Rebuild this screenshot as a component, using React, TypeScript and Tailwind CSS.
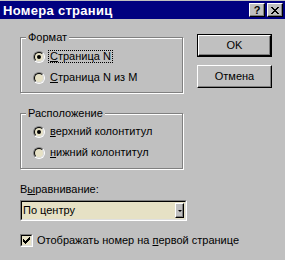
import React from "react";

function Radio({ checked }: { checked?: boolean }) {
  return (
    <span className="flex h-3 w-3 shrink-0 rounded-full border border-t-[#808080] border-l-[#808080] border-b-white border-r-white">
      <span className="flex flex-1 items-center justify-center rounded-full border border-t-black border-l-black border-b-[#dfdfdf] border-r-[#dfdfdf] bg-[#e6e1c5]">
        {checked && <span className="h-1 w-1 rounded-full bg-black" />}
      </span>
    </span>
  );
}

function Group({ label, children }: { label: string; children: React.ReactNode }) {
  return (
    <div className="flex h-[56px] w-[163px] flex-col border border-[#808080] shadow-[inset_1px_1px_0_#fff,1px_1px_0_#fff]">
      <span className="-mt-[7px] ml-[5px] w-fit bg-[#c0c0c0] px-[2px] leading-[13px]">{label}</span>
      {children}
    </div>
  );
}

function Button({ children, isDefault }: { children: React.ReactNode; isDefault?: boolean }) {
  return (
    <div className={isDefault ? "h-[23px] w-[75px] border border-black" : "h-[23px] w-[75px]"}>
      <div className="flex h-full w-full items-center justify-center border border-t-white border-l-white border-b-black border-r-black shadow-[inset_-1px_-1px_0_#808080]">
        {children}
      </div>
    </div>
  );
}

export default function App() {
  return (
    <div className="h-[260px] w-[285px] overflow-hidden bg-[#c0c0c0] text-[11px] text-black [font-family:'Liberation_Sans',Arial,sans-serif]">
      <div className="mt-px flex h-[18px] items-center justify-between bg-[#000080] pl-[3px] pr-[2px]">
        <span className="text-[13px] font-bold leading-none tracking-[0.3px] text-white">Номера страниц</span>
        <div className="flex gap-[2px]">
          <span className="flex h-[14px] w-4 items-center justify-center border border-t-white border-l-white border-b-black border-r-black bg-[#c0c0c0] text-[11px] font-bold leading-none shadow-[inset_-1px_-1px_0_#808080]">
            ?
          </span>
          <span className="flex h-[14px] w-4 items-center justify-center border border-t-white border-l-white border-b-black border-r-black bg-[#c0c0c0] shadow-[inset_-1px_-1px_0_#808080]">
            <svg width="8" height="7" viewBox="0 0 8 7" shapeRendering="crispEdges">
              <path d="M0 0h2v1h-2zM6 0h2v1h-2zM1 1h2v1h-2zM5 1h2v1h-2zM2 2h4v1h-4zM3 3h2v1h-2zM2 4h4v1h-4zM1 5h2v1h-2zM5 5h2v1h-2zM0 6h2v1h-2zM6 6h2v1h-2z" fill="#000" />
            </svg>
          </span>
        </div>
      </div>

      <div className="flex pl-[20px]">
        <div className="flex w-[167px] shrink-0 flex-col">
          <div className="mt-[18px]">
            <Group label="Формат">
              <div className="ml-[12px] mt-[6px] flex h-[13px] items-center gap-[3px]">
                <Radio checked />
                <span className="border border-dotted border-black px-px leading-[11px]">
                  <u>С</u>траница N
                </span>
              </div>
              <div className="ml-[12px] mt-[8px] flex h-[13px] items-center gap-[4px]">
                <Radio />
                <span className="px-px leading-[11px]">
                  <u>С</u>траница N из М
                </span>
              </div>
            </Group>
          </div>
          <div className="mt-[20px]">
            <Group label="Расположение">
              <div className="ml-[12px] mt-[5px] flex h-[13px] items-center gap-[4px]">
                <Radio checked />
                <span className="px-px leading-[11px]">
                  <u>в</u>ерхний колонтитул
                </span>
              </div>
              <div className="ml-[12px] mt-[8px] flex h-[13px] items-center gap-[4px]">
                <Radio />
                <span className="px-px leading-[11px]">
                  <u>н</u>ижний колонтитул
                </span>
              </div>
            </Group>
          </div>
          <span className="mt-[14px] leading-[13px]">
            В<u>ы</u>равнивание:
          </span>
          <div className="mt-[4px] flex h-[21px] w-[167px] border border-t-[#808080] border-l-[#808080] border-b-white border-r-white">
            <div className="flex flex-1 items-center border border-t-black border-l-black border-b-[#dfdfdf] border-r-[#dfdfdf] bg-[#e6e1c5] pl-px pr-px">
              <span className="flex-1 leading-none">По центру</span>
              <span className="flex h-[15px] w-[9px] items-center justify-center border border-t-white border-l-white border-b-black border-r-black bg-[#c0c0c0] shadow-[inset_-1px_-1px_0_#808080]">
                <span className="h-0 w-0 border-x-[2px] border-t-[2px] border-x-transparent border-t-black" />
              </span>
            </div>
          </div>
          <div className="mt-[13px] flex h-[13px] items-center gap-[4px] whitespace-nowrap">
            <span className="flex h-[13px] w-[13px] shrink-0 border border-t-[#808080] border-l-[#808080] border-b-white border-r-white">
              <span className="flex flex-1 items-center justify-center border border-t-black border-l-black border-b-[#dfdfdf] border-r-[#dfdfdf] bg-[#e6e1c5]">
                <svg width="7" height="7" viewBox="0 0 7 7" shapeRendering="crispEdges">
                  <path d="M6 0h1v3h-1zM5 1h1v3h-1zM4 2h1v3h-1zM3 3h1v3h-1zM2 4h1v3h-1zM1 3h1v3h-1zM0 2h1v3h-1z" fill="#000" />
                </svg>
              </span>
            </span>
            <span className="leading-[13px]">
              Отображать номер на <u>п</u>ервой странице
            </span>
          </div>
        </div>

        <div className="ml-[10px] mt-[15px] flex shrink-0 flex-col gap-[8px]">
          <Button isDefault>OK</Button>
          <Button>Отмена</Button>
        </div>
      </div>
    </div>
  );
}
